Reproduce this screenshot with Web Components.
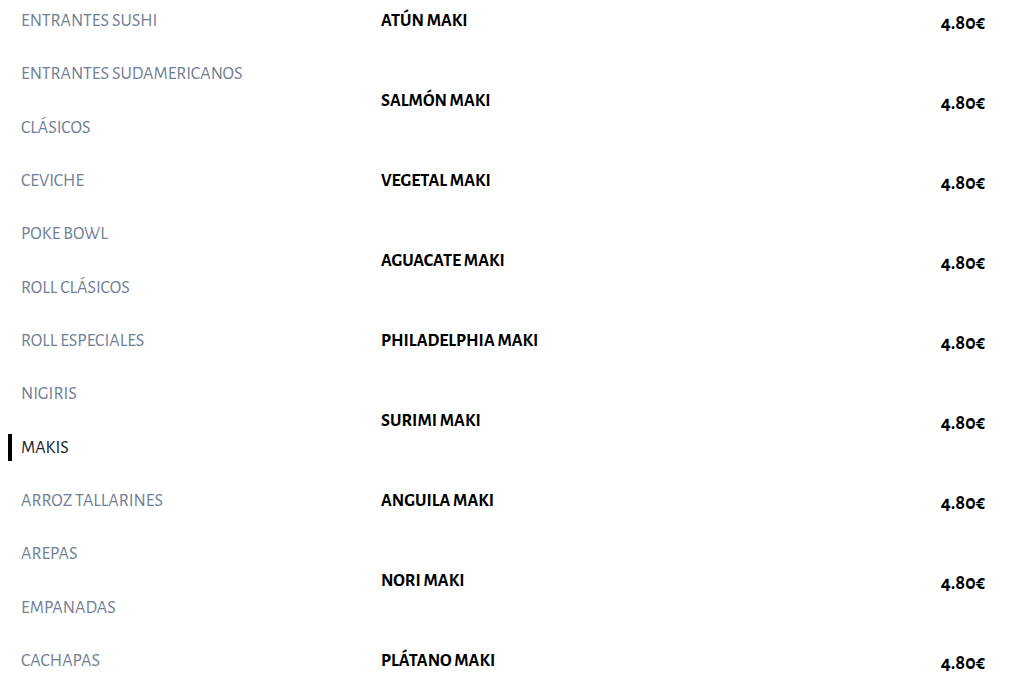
<!DOCTYPE html>
<html lang="es">
<head>
<meta charset="utf-8">
<meta name="viewport" content="width=device-width, initial-scale=1">
<title>Carta – Makis</title>
<style>
  body { margin: 0; background: #fff; color: #000; font-family: "Alegreya Sans", Lato, sans-serif; }
</style>
</head>
<body>
<menu-page>
  <category-nav slot="nav">
    <category-link>ENTRANTES SUSHI</category-link>
    <category-link>ENTRANTES SUDAMERICANOS</category-link>
    <category-link>CLÁSICOS</category-link>
    <category-link>CEVICHE</category-link>
    <category-link>POKE BOWL</category-link>
    <category-link>ROLL CLÁSICOS</category-link>
    <category-link>ROLL ESPECIALES</category-link>
    <category-link>NIGIRIS</category-link>
    <category-link active>MAKIS</category-link>
    <category-link>ARROZ TALLARINES</category-link>
    <category-link>AREPAS</category-link>
    <category-link>EMPANADAS</category-link>
    <category-link>CACHAPAS</category-link>
  </category-nav>
  <dish-list>
    <dish-row price="4.80€">ATÚN MAKI</dish-row>
    <dish-row price="4.80€">SALMÓN MAKI</dish-row>
    <dish-row price="4.80€">VEGETAL MAKI</dish-row>
    <dish-row price="4.80€">AGUACATE MAKI</dish-row>
    <dish-row price="4.80€">PHILADELPHIA MAKI</dish-row>
    <dish-row price="4.80€">SURIMI MAKI</dish-row>
    <dish-row price="4.80€">ANGUILA MAKI</dish-row>
    <dish-row price="4.80€">NORI MAKI</dish-row>
    <dish-row price="4.80€">PLÁTANO MAKI</dish-row>
  </dish-list>
</menu-page>

<template id="page-template">
  <style>
    :host { display: grid; grid-template-columns: 1fr 2fr; column-gap: 71px; padding: 7px 38px 0 8px; }
    main { min-width: 0; }
    ::slotted(category-nav) { padding-bottom: 5px; }
  </style>
  <slot name="nav"></slot>
  <main><slot></slot></main>
</template>

<template id="nav-template">
  <style>
    :host { display: grid; }
    nav { display: flex; flex-direction: column; justify-content: space-between; }
  </style>
  <nav aria-label="Categorías"><slot></slot></nav>
</template>

<template id="link-template">
  <style>
    :host { display: block; }
    a { display: block; padding: 2px 0 0 9px; border-left: 4px solid transparent; color: #718096; font-size: 18px; line-height: 25px; text-decoration: none; }
    :host([active]) a { border-color: #000; color: #1a202c; }
  </style>
  <a href="#"><slot></slot></a>
</template>

<template id="list-template">
  <style>
    :host { display: grid; row-gap: 48px; }
  </style>
  <slot></slot>
</template>

<template id="dish-template">
  <style>
    :host { display: flex; justify-content: space-between; align-items: flex-start; font-weight: 700; }
    h3 { margin: 0; font-size: 18px; line-height: 29px; }
    span { font-size: 20px; line-height: 32px; }
  </style>
  <h3><slot></slot></h3>
  <span></span>
</template>

<script>
  class TemplateElement extends HTMLElement {
    constructor() {
      super();
      const template = document.getElementById(this.constructor.template);
      this.attachShadow({ mode: "open" }).append(template.content.cloneNode(true));
    }
  }
  class MenuPage extends TemplateElement { static template = "page-template"; }
  class CategoryNav extends TemplateElement { static template = "nav-template"; }
  class CategoryLink extends TemplateElement {
    static template = "link-template";
    connectedCallback() {
      if (this.hasAttribute("active")) this.shadowRoot.querySelector("a").setAttribute("aria-current", "page");
    }
  }
  class DishList extends TemplateElement { static template = "list-template"; }
  class DishRow extends TemplateElement {
    static template = "dish-template";
    connectedCallback() {
      this.shadowRoot.querySelector("span").textContent = this.getAttribute("price");
    }
  }
  customElements.define("menu-page", MenuPage);
  customElements.define("category-nav", CategoryNav);
  customElements.define("category-link", CategoryLink);
  customElements.define("dish-list", DishList);
  customElements.define("dish-row", DishRow);
</script>
</body>
</html>
